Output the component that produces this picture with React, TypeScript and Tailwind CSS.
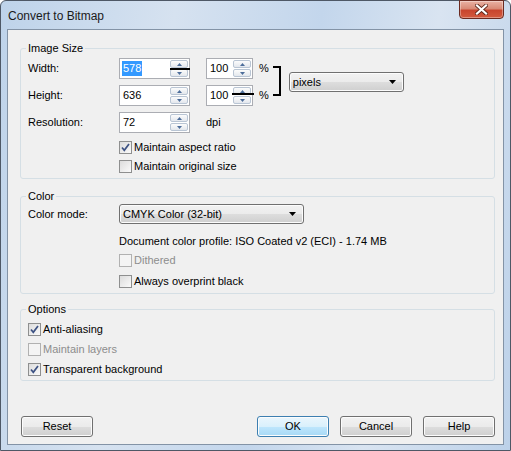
import React from "react";

function Arrow({ up }: { up?: boolean }) {
  return (
    <svg width="5" height="3" viewBox="0 0 5 3">
      <path d={up ? "M0 3 L2.5 0 L5 3Z" : "M0 0 L2.5 3 L5 0Z"} fill="#4d6d9a" />
    </svg>
  );
}

function SpinBox({
  value,
  width,
  selected,
  line,
}: {
  value: string;
  width: string;
  selected?: boolean;
  line?: string;
}) {
  return (
    <div className={`relative ${width} h-[21px] border border-[#abadb3] bg-white flex items-stretch py-[1px] pr-[1px]`}>
      <div className="flex-1 flex items-center pl-[3px]">
        <span className={selected ? "bg-[#3399ff] text-white px-[1px] -ml-[1px] leading-[15px]" : "leading-[15px]"}>{value}</span>
      </div>
      <div className="flex flex-col gap-[1px] w-[18px]">
        <div className="h-[8px] rounded-[2px] border border-[#b9c5d4] bg-gradient-to-b from-[#fcfcfc] to-[#e3e7ed] flex items-center justify-center">
          <Arrow up />
        </div>
        <div className="h-[8px] rounded-[2px] border border-[#b9c5d4] bg-gradient-to-b from-[#fcfcfc] to-[#e3e7ed] flex items-center justify-center">
          <Arrow />
        </div>
      </div>
      {/* link line drawn over the spinner */}
      {line && <div className={`absolute h-[2px] bg-black ${line}`}></div>}
    </div>
  );
}

function Select({ label, width }: { label: string; width: string }) {
  return (
    <div className={`${width} h-[20px] rounded-[3px] border border-[#707070] bg-[linear-gradient(to_bottom,#f2f2f2_0%,#ebebeb_50%,#dddddd_51%,#cfcfcf_100%)] flex items-center pl-[3px] pr-[7px] shadow-[inset_0_0_0_1px_#fcfcfc]`}>
      <span className="flex-1">{label}</span>
      <svg width="7" height="4" viewBox="0 0 7 4">
        <path d="M0 0 L7 0 L3.5 4Z" fill="#000" />
      </svg>
    </div>
  );
}

function Checkbox({ label, checked, disabled }: { label: string; checked?: boolean; disabled?: boolean }) {
  return (
    <div className="flex items-center h-[19px]">
      <div
        className={`w-[13px] h-[13px] border flex items-center justify-center ${
          disabled ? "border-[#b1b1b1] bg-[#f4f4f4]" : "border-[#8e8f8f] bg-gradient-to-br from-[#dcdcdc] to-[#fafafa]"
        }`}
      >
        {checked && (
          <svg width="9" height="9" viewBox="0 0 9 9">
            <path d="M1 4.5 L3.3 7.3 L8 1" stroke="#3d5283" strokeWidth="1.7" fill="none" />
          </svg>
        )}
      </div>
      <span className={`ml-[2px] ${disabled ? "text-[#8d8d8d]" : ""}`}>{label}</span>
    </div>
  );
}

function Button({ label, primary }: { label: string; primary?: boolean }) {
  return (
    <div
      className={`w-[72px] h-[21px] rounded-[3px] border flex items-center justify-center shadow-[inset_0_0_0_1px_#fcfcfc] ${
        primary
          ? "border-[#3c7fb1] bg-[linear-gradient(to_bottom,#eaf6fd_0%,#d9f0fc_50%,#bee6fd_51%,#a7d9f5_100%)]"
          : "border-[#707070] bg-[linear-gradient(to_bottom,#f2f2f2_0%,#ebebeb_50%,#dddddd_51%,#cfcfcf_100%)]"
      }`}
    >
      {label}
    </div>
  );
}

export default function App() {
  return (
    <div className="w-[511px] h-[451px] border border-[#4e5866] rounded-t-[6px] bg-[linear-gradient(100deg,#bed3ea_0%,#d6e2f0_30%,#c3d6ec_55%,#d9e4f1_75%,#bcd1e9_100%)] flex flex-col font-['Liberation_Sans',Arial,sans-serif] text-[11px] text-black">
      {/* Title bar */}
      <div className="h-[28px] flex items-start justify-between pl-[7px] pr-[6px]">
        <span className="self-center text-[12px] text-[#1a1a1a] mt-[1px]">Convert to Bitmap</span>
        <div className="w-[45px] h-[19px] -mt-[1px] rounded-b-[4px] border border-[#6b2a20] bg-[linear-gradient(to_bottom,#eab2a4_0%,#d88a76_45%,#c8452e_55%,#d35a3e_100%)] flex items-center justify-center shadow-[inset_0_0_0_1px_rgba(255,255,255,0.35)]">
          <svg width="13" height="11" viewBox="0 0 13 11">
            <path d="M2 1.5 L11 9.5 M11 1.5 L2 9.5" stroke="#5a2418" strokeWidth="3.8" strokeLinecap="square" />
            <path d="M2 1.5 L11 9.5 M11 1.5 L2 9.5" stroke="#ffffff" strokeWidth="2.2" strokeLinecap="square" />
          </svg>
        </div>
      </div>

      {/* Client area */}
      <div className="flex-1 mx-[6px] mb-[5px] border border-[#8393a6] bg-[#f0f0f0] flex flex-col pl-[12px] pr-[8px] pt-[11px] pb-[7px]">
        {/* Image Size */}
        <fieldset className="border border-[#d5dfe5] rounded-[3px] pl-[7px] pt-[3px] pb-[2px]">
          <legend className="-ml-[2px] px-[2px] leading-[14px]">Image Size</legend>
          <div className="flex items-center">
            <div className="flex flex-col gap-[6px]">
              <div className="flex items-center h-[21px]">
                <span className="w-[91px]">Width:</span>
                <SpinBox value="578" width="w-[71px]" selected line="left-[50px] top-[9px] w-[20px]" />
                <div className="ml-[16px]">
                  <SpinBox value="100" width="w-[47px]" />
                </div>
                <span className="ml-[6px]">%</span>
              </div>
              <div className="flex items-center h-[21px]">
                <span className="w-[91px]">Height:</span>
                <SpinBox value="636" width="w-[71px]" />
                <div className="ml-[16px]">
                  <SpinBox value="100" width="w-[47px]" line="left-[25px] top-[7px] w-[22px]" />
                </div>
                <span className="ml-[6px]">%</span>
              </div>
            </div>
            <div className="ml-[4px] -mt-[2px] w-[8px] h-[30px] border-y-2 border-r-2 border-black"></div>
            <div className="ml-[8px]">
              <Select label="pixels" width="w-[115px]" />
            </div>
          </div>
          <div className="flex items-center h-[21px] mt-[6px]">
            <span className="w-[91px]">Resolution:</span>
            <SpinBox value="72" width="w-[71px]" />
            <span className="ml-[16px]">dpi</span>
          </div>
          <div className="ml-[91px] mt-[5px] flex flex-col">
            <Checkbox label="Maintain aspect ratio" checked />
            <Checkbox label="Maintain original size" />
          </div>
        </fieldset>

        {/* Color */}
        <fieldset className="mt-[10px] border border-[#d5dfe5] rounded-[3px] pl-[7px] pt-[1px] pb-[2px]">
          <legend className="-ml-[2px] px-[2px] leading-[14px]">Color</legend>
          <div className="flex items-center h-[20px]">
            <span className="w-[91px]">Color mode:</span>
            <Select label="CMYK Color (32-bit)" width="w-[185px]" />
          </div>
          <div className="ml-[91px] mt-[10px] leading-[14px]">Document color profile: ISO Coated v2 (ECI) - 1.74 MB</div>
          <div className="ml-[91px] mt-[3px] flex flex-col gap-[2px]">
            <Checkbox label="Dithered" disabled />
            <Checkbox label="Always overprint black" />
          </div>
        </fieldset>

        {/* Options */}
        <fieldset className="mt-[8px] border border-[#d5dfe5] rounded-[3px] pl-[7px] pt-[4px] pb-[1px]">
          <legend className="-ml-[2px] px-[2px] leading-[14px]">Options</legend>
          <div className="flex flex-col gap-[1px]">
            <Checkbox label="Anti-aliasing" checked />
            <Checkbox label="Maintain layers" disabled />
            <Checkbox label="Transparent background" checked />
          </div>
        </fieldset>

        {/* Buttons */}
        <div className="mt-auto flex items-center">
          <div className="ml-[1px]">
            <Button label="Reset" />
          </div>
          <div className="flex-1"></div>
          <div className="flex gap-[11px]">
            <Button label="OK" primary />
            <Button label="Cancel" />
            <Button label="Help" />
          </div>
        </div>
      </div>
    </div>
  );
}
